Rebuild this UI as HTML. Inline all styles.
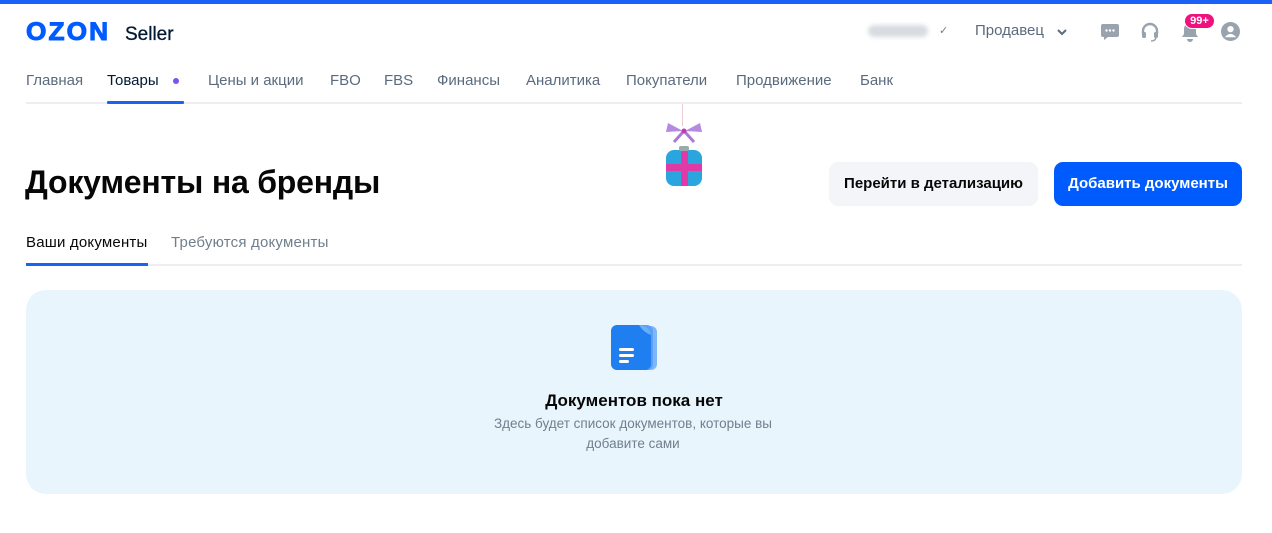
<!DOCTYPE html>
<html><head><meta charset="utf-8"><style>
*{margin:0;padding:0;box-sizing:border-box}
body{width:1272px;height:533px;background:#fff;font-family:"Liberation Sans",sans-serif;position:relative;overflow:hidden;color:#001a34}
.a{position:absolute}
.nav span{position:absolute;top:72px;font-size:15px;color:#5b6b7d;white-space:nowrap}
</style></head><body>
<div class="a" style="left:0;top:0;width:1272px;height:4px;background:#1a62f6"></div>
<div class="a" style="left:26px;top:18px;font-size:25px;font-weight:900;color:#005bff;letter-spacing:2px;line-height:28px;-webkit-text-stroke:1px #005bff;transform:scaleX(1.05);transform-origin:left">OZON</div>
<div class="a" style="left:125px;top:23px;font-size:19px;color:#001a34;line-height:24px;-webkit-text-stroke:.3px #001a34">Seller</div>

<div class="a" style="left:868px;top:25px;width:60px;height:12px;background:#d8dbe0;border-radius:6px;filter:blur(2px)"></div>
<div class="a" style="left:939px;top:24px;font-size:11px;color:#707f8d">✓</div>
<div class="a" style="left:975px;top:22px;font-size:15px;color:#5b6b7d">Продавец</div>
<svg class="a" style="left:1056px;top:27px" width="12" height="10" viewBox="0 0 12 10"><path d="M2 3l4 4 4-4" stroke="#5b6b7d" stroke-width="2" fill="none"/></svg>
<svg class="a" style="left:1100px;top:23px" width="20" height="18" viewBox="0 0 20 18"><path d="M3 1h14a2 2 0 0 1 2 2v9a2 2 0 0 1-2 2H8l-4 3v-3H3a2 2 0 0 1-2-2V3a2 2 0 0 1 2-2z" fill="#99a3ae"/><circle cx="6.5" cy="7.5" r="1.2" fill="#fff"/><circle cx="10" cy="7.5" r="1.2" fill="#fff"/><circle cx="13.5" cy="7.5" r="1.2" fill="#fff"/></svg>
<svg class="a" style="left:1140px;top:22px" width="20" height="20" viewBox="0 0 20 20"><path d="M3 12V9a7 7 0 0 1 14 0v3" stroke="#99a3ae" stroke-width="2.4" fill="none"/><rect x="2" y="10" width="4" height="6" rx="1.5" fill="#99a3ae"/><rect x="14" y="10" width="4" height="6" rx="1.5" fill="#99a3ae"/><path d="M16 16q-1 3-5 3" stroke="#99a3ae" stroke-width="1.5" fill="none"/></svg>
<svg class="a" style="left:1181px;top:22px" width="18" height="20" viewBox="0 0 18 20"><path d="M9 1a6 6 0 0 1 6 6v5l2 3H1l2-3V7a6 6 0 0 1 6-6z" fill="#99a3ae"/><path d="M6 17a3 3 0 0 0 6 0z" fill="#99a3ae"/></svg>
<div class="a" style="left:1184px;top:13px;width:31px;height:16px;background:#f1117e;border-radius:8px;color:#fff;font-size:11px;font-weight:bold;text-align:center;line-height:14px;border:1px solid #fff">99+</div>
<svg class="a" style="left:1221px;top:22px" width="19" height="19" viewBox="0 0 20 20"><circle cx="10" cy="10" r="10" fill="#99a3ae"/><circle cx="10" cy="7.5" r="3.3" fill="#fff"/><path d="M4 16q6-7 12 0" fill="#fff"/></svg>

<div class="nav">
<span style="left:26px">Главная</span>
<span style="left:107px;color:#001a34">Товары</span>
<span style="left:208px">Цены и акции</span>
<span style="left:330px">FBO</span>
<span style="left:384px">FBS</span>
<span style="left:437px">Финансы</span>
<span style="left:526px">Аналитика</span>
<span style="left:626px">Покупатели</span>
<span style="left:736px">Продвижение</span>
<span style="left:860px">Банк</span>
</div>
<div class="a" style="left:173px;top:78px;width:6px;height:6px;border-radius:50%;background:#7b51f0"></div>
<div class="a" style="left:26px;top:102px;width:1216px;height:2px;background:#eceef1"></div>
<div class="a" style="left:107px;top:101px;width:77px;height:3px;background:#1a62f6;border-radius:1px"></div>

<div class="a" style="left:682px;top:104px;width:1px;height:22px;background:#eccbd6"></div>
<svg class="a" style="left:664px;top:120px" width="40" height="68" viewBox="0 0 40 68">
<path d="M19 11L4 3 2 12z" fill="#b58ae0"/><path d="M21 11L36 3 38 12z" fill="#b58ae0"/><path d="M19 12l-9 10M21 12l9 10" stroke="#a97ad8" stroke-width="3"/><circle cx="20" cy="11" r="2.5" fill="#c03ab0"/>
<rect x="2" y="30" width="36" height="36" rx="8" fill="#2aa5dd"/><rect x="2" y="44" width="36" height="7" fill="#e03aa6"/><rect x="17" y="30" width="7" height="36" fill="#e03aa6"/><rect x="15" y="26" width="10" height="5" rx="2" fill="#9aa"/></svg>

<div class="a" style="left:25px;top:164px;font-size:32px;font-weight:bold;color:#070707;letter-spacing:-.2px">Документы на бренды</div>
<div class="a" style="left:829px;top:162px;width:209px;height:44px;background:#f4f5f8;border-radius:9px;font-size:15px;font-weight:bold;color:#070707;text-align:center;line-height:44px">Перейти в детализацию</div>
<div class="a" style="left:1054px;top:162px;width:188px;height:44px;background:#005bff;border-radius:9px;font-size:15px;font-weight:bold;color:#fff;text-align:center;line-height:44px">Добавить документы</div>

<div class="a" style="left:26px;top:234px;font-size:15px;color:#070707;letter-spacing:.2px">Ваши документы</div>
<div class="a" style="left:171px;top:234px;font-size:15px;color:#707f8d;letter-spacing:.2px">Требуются документы</div>
<div class="a" style="left:26px;top:264px;width:1216px;height:2px;background:#eceef1"></div>
<div class="a" style="left:26px;top:263px;width:122px;height:3px;background:#1a62f6"></div>

<div class="a" style="left:26px;top:290px;width:1216px;height:204px;background:#e9f5fd;border-radius:20px"></div>
<svg class="a" style="left:609px;top:323px" width="50" height="50" viewBox="0 0 50 50"><rect x="10" y="3" width="38" height="44" rx="6" fill="#7fb6f7"/><rect x="6" y="2" width="38" height="45" rx="6" fill="#5ba0f5"/><path d="M8 2h22q10 0 12 10v29a6 6 0 0 1-6 6H8a6 6 0 0 1-6-6V8a6 6 0 0 1 6-6z" fill="#1f7ff0"/><path d="M30 2q10 0 12 10q-8-3-12-10z" fill="#6aaef7"/><rect x="10" y="25" width="15" height="3" rx="1.5" fill="#fff"/><rect x="10" y="31" width="15" height="3" rx="1.5" fill="#fff"/><rect x="10" y="37" width="10" height="3" rx="1.5" fill="#fff"/></svg>
<div class="a" style="left:0;width:1268px;top:391px;text-align:center;font-size:17px;font-weight:bold;color:#070707">Документов пока нет</div>
<div class="a" style="left:0;width:1266px;top:414px;text-align:center;font-size:13.5px;color:#707f8d;line-height:20px">Здесь будет список документов, которые вы<br>добавите сами</div>
</body></html>
